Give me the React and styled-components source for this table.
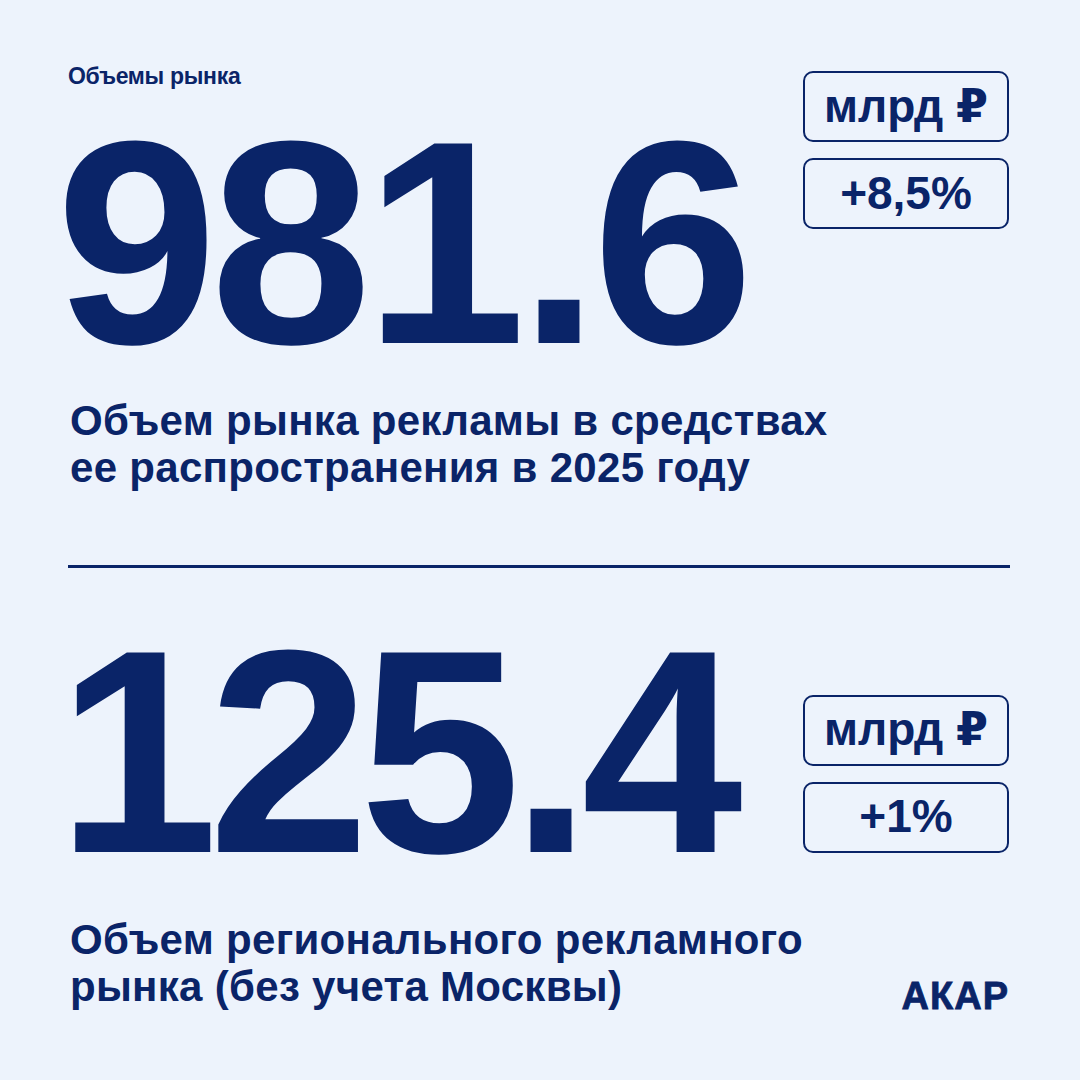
import styled, { createGlobalStyle } from 'styled-components'

const navy = '#0a2468'
const paper = '#edf3fc'

const GlobalStyle = createGlobalStyle`
    html, body {
        margin: 0;
        padding: 0;
        background: ${paper};
    }
    body {
        font-family: 'Liberation Sans', Arial, 'DejaVu Sans', sans-serif;
        color: ${navy};
    }
`

const Page = styled.div`
    box-sizing: border-box;
    width: 1080px;
    height: 1080px;
    padding: 63px 71px 0 68px;
    background: ${paper};
    display: flex;
    flex-direction: column;
    overflow: hidden;
`

const Section = styled.section`
    display: flex;
    justify-content: space-between;
    align-items: flex-start;
`

const Column = styled.div`
    flex: 1;
    min-width: 0;
    display: flex;
    flex-direction: column;
`

const Label = styled.div`
    font-size: 23px;
    line-height: 26px;
    font-weight: 700;
    letter-spacing: -0.3px;
`

const BigNumber = styled.div`
    font-size: 290px;
    line-height: 290px;
    font-weight: 700;
    letter-spacing: ${(props) => props.$spacing || -10}px;
    margin-top: ${(props) => props.$top || 0}px;
    margin-left: ${(props) => props.$shift || 0}px;
    white-space: nowrap;
`

const Description = styled.p`
    margin: ${(props) => props.$top || 0}px 0 0 2px;
    font-size: 42px;
    line-height: 47px;
    font-weight: 700;
    letter-spacing: 0.3px;
    white-space: nowrap;
`

const BadgeStack = styled.div`
    flex-shrink: 0;
    display: flex;
    flex-direction: column;
    gap: 16px;
    margin-top: ${(props) => props.$top || 0}px;
`

const Badge = styled.div`
    box-sizing: border-box;
    width: 206px;
    height: 71px;
    border: 2.5px solid ${navy};
    border-radius: 10px;
    display: flex;
    align-items: center;
    justify-content: center;
    font-size: 46px;
    font-weight: 700;
    padding-bottom: 2px;
`

const Divider = styled.hr`
    margin: 74px 0 0 0;
    border: none;
    height: 2.5px;
    background: ${navy};
    width: 942px;
`

const Footer = styled.div`
    display: flex;
    justify-content: space-between;
    align-items: flex-end;
`

const Logo = styled.div`
    font-size: 38px;
    line-height: 38px;
    font-weight: 700;
    letter-spacing: 1px;
    -webkit-text-stroke: 0.8px ${navy};
    margin-bottom: -5px;
`

function Badges({ unit, change, top }) {
    return (
        <BadgeStack $top={top}>
            <Badge>{unit}</Badge>
            <Badge>{change}</Badge>
        </BadgeStack>
    )
}

function App() {
    return (
        <>
            <GlobalStyle />
            <Page>
                <Section>
                    <Column>
                        <Label>Объемы рынка</Label>
                        <BigNumber $top={8} $shift={-12} $spacing={-7}>
                            981.6
                        </BigNumber>
                        <Description $top={10}>
                            Объем рынка рекламы в средствах
                            <br />
                            ее распространения в 2025 году
                        </Description>
                    </Column>
                    <Badges unit="млрд ₽" change="+8,5%" top={8} />
                </Section>

                <Divider />

                <Section>
                    <BigNumber $top={38} $shift={-11} $spacing={-10}>
                        125.4
                    </BigNumber>
                    <Badges unit="млрд ₽" change="+1%" top={127} />
                </Section>

                <Footer>
                    <Description $top={20}>
                        Объем регионального рекламного
                        <br />
                        рынка (без учета Москвы)
                    </Description>
                    <Logo>АКАР</Logo>
                </Footer>
            </Page>
        </>
    )
}

export default App
